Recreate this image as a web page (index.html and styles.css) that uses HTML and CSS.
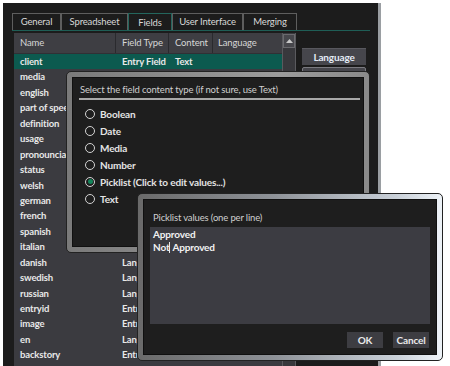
FILE: index.html
```html
<!DOCTYPE html>
<html lang="en">
<head>
    <meta charset="UTF-8">
    <meta name="viewport" content="width=device-width, initial-scale=1.0">
    <title>Fields</title>
    <link rel="stylesheet" href="styles.css">
</head>
<body>
    <div class="window">
        <ul class="tabs">
            <li class="tab tab_general">General</li>
            <li class="tab tab_sheet">Spreadsheet</li>
            <li class="tab tab_fields on">Fields</li>
            <li class="tab tab_ui">User Interface</li>
            <li class="tab tab_merge">Merging</li>
        </ul>
        <div class="fields">
            <div class="grid">
                <div class="grid_head">
                    <span>Name</span>
                    <span>Field Type</span>
                    <span>Content</span>
                    <span>Language</span>
                </div>
                <!-- cells hidden behind the dialogs are left empty -->
                <ul class="rows">
                    <li class="row selected"><span>client</span><span>Entry Field</span><span>Text</span><span></span></li>
                    <li class="row"><span>media</span><span></span><span></span><span></span></li>
                    <li class="row"><span>english</span><span></span><span></span><span></span></li>
                    <li class="row"><span class="cut">part of speech</span><span></span><span></span><span></span></li>
                    <li class="row"><span>definition</span><span></span><span></span><span></span></li>
                    <li class="row"><span>usage</span><span></span><span></span><span></span></li>
                    <li class="row"><span class="cut">pronounciation</span><span></span><span></span><span></span></li>
                    <li class="row"><span>status</span><span></span><span></span><span></span></li>
                    <li class="row"><span>welsh</span><span></span><span></span><span></span></li>
                    <li class="row"><span>german</span><span></span><span></span><span></span></li>
                    <li class="row"><span>french</span><span></span><span></span><span></span></li>
                    <li class="row"><span>spanish</span><span></span><span></span><span></span></li>
                    <li class="row"><span>italian</span><span></span><span></span><span></span></li>
                    <li class="row"><span>danish</span><span class="peek">Language</span><span></span><span></span></li>
                    <li class="row"><span>swedish</span><span class="peek">Language</span><span></span><span></span></li>
                    <li class="row"><span>russian</span><span class="peek">Language</span><span></span><span></span></li>
                    <li class="row"><span>entryid</span><span class="peek">Entry Field</span><span></span><span></span></li>
                    <li class="row"><span>image</span><span class="peek">Entry Field</span><span></span><span></span></li>
                    <li class="row"><span>en</span><span class="peek">Language</span><span></span><span></span></li>
                    <li class="row"><span>backstory</span><span class="peek">Entry Field</span><span></span><span></span></li>
                </ul>
            </div>
            <div class="scrollbar">
                <div class="scroll_up">
                    <svg width="7" height="4" viewBox="0 0 7 4"><path d="M0 4 L3.5 0 L7 4 Z" fill="#c8c8c8"/></svg>
                </div>
            </div>
            <div class="side">
                <button class="side_btn">Language</button>
                <button class="side_btn"></button>
            </div>
        </div>
    </div>

    <!-- content type dialog -->
    <div class="dialog dialog_type">
        <div class="dialog_body">
            <div class="type_title">Select the field content type (if not sure, use Text)</div>
            <ul class="radios">
                <li class="radio"><i class="dot"></i>Boolean</li>
                <li class="radio"><i class="dot"></i>Date</li>
                <li class="radio"><i class="dot"></i>Media</li>
                <li class="radio"><i class="dot"></i>Number</li>
                <li class="radio checked"><i class="dot"></i>Picklist (Click to edit values...)</li>
                <li class="radio"><i class="dot"></i>Text</li>
            </ul>
        </div>
    </div>

    <!-- picklist dialog -->
    <div class="dialog dialog_pick">
        <div class="dialog_body">
            <div class="pick_title">Picklist values (one per line)</div>
            <div class="pick_values">
                <div>Approved</div>
                <div>Not<span class="caret"></span> Approved</div>
            </div>
            <div class="pick_btns">
                <button class="btn">OK</button>
                <button class="btn">Cancel</button>
            </div>
        </div>
    </div>
</body>
</html>
```

FILE: styles.css
```css
*{
    margin: 0;
    padding: 0;
    list-style: none;
    box-sizing: border-box;
}
body{
    background: #fff;
    font-family: Lato, "Open Sans", sans-serif;
    font-size: 9.5px;
    letter-spacing: -0.15px;
    color: #e4e4e4;
    overflow: hidden;
}
.window{
    width: 378px;
    height: 363px;
    margin: 3px 0 0 3px;
    padding-left: 11px;
    background: #1c1c1c;
    border-right: 3px solid #9a9ea2;
    overflow: hidden;
}

/* tabs */
.tabs{
    display: flex;
    width: 358px;
    height: 18px;
    margin: 10px 0 0 -2px;
    border-bottom: 1px solid #1f5e56;
}
.tab{
    height: 17px;
    line-height: 16px;
    text-align: center;
    border: 1px solid #5e5e5e;
    border-bottom: 0;
    color: #d8d8d8;
}
.tab_general{ width: 49px; }
.tab_sheet{ width: 67px; }
.tab_fields{ width: 44px; }
.tab_ui{ width: 71px; }
.tab_merge{ width: 54px; }
.tab.on{
    border-color: #24665d;
    line-height: 18px;
}

/* field list */
.fields{
    display: flex;
    margin-top: 2px;
    height: 340px;
}
.grid{
    width: 268px;
    background: #3b3b40;
}
.grid_head,
.row{
    display: grid;
    grid-template-columns: 102px 53px 44px 69px;
}
.grid_head{
    height: 21px;
    line-height: 20px;
    background: #3e3e43;
    border-bottom: 1px solid #303035;
    color: #d6d6d6;
}
.grid_head span{
    padding-left: 6px;
    border-right: 1px solid #2a2a2e;
}
.grid_head span:last-child{
    border-right: 0;
    padding-left: 5px;
}
.row{
    height: 15.45px;
    line-height: 15.45px;
    font-weight: 700;
    color: #e8e8e8;
}
.row span{
    padding-left: 6px;
    white-space: nowrap;
    overflow: hidden;
}
.row span.cut{
    width: 52px;
    padding-left: 0;
    margin-left: 6px;
}
.row span.peek{
    width: 15px;
    padding-left: 0;
    margin-left: 6px;
}
.row.selected{
    background: #0c5a4f;
}
.scrollbar{
    width: 14px;
    background: #38383c;
    border-left: 1px solid #5a5a5e;
    border-right: 1px solid #5a5a5e;
}
.scroll_up{
    height: 14px;
    margin: 1px 0 0 0;
    background: #47474c;
    border: 1px solid #6a6a6e;
    display: flex;
    align-items: center;
    justify-content: center;
}
.side{
    display: flex;
    flex-direction: column;
    gap: 2px;
    margin: 15px 0 0 6px;
}
.side_btn{
    width: 64px;
    height: 17px;
    background: #46464c;
    border: 0;
    border-top: 1px solid #58585e;
    color: #e4ecf6;
    font-family: inherit;
    font-size: 10px;
    letter-spacing: inherit;
    font-weight: 700;
}
.side_btn:last-child{
    border: 1px solid #7a7a80;
    border-radius: 2px;
}

/* dialogs */
.dialog{
    position: absolute;
    padding: 5px;
    border: 1px solid #222;
    border-radius: 5px;
}
.dialog_body{
    height: 100%;
    background: #1e1e1e;
    border: 1px solid #101010;
}
.dialog_type{
    left: 66px;
    top: 71px;
    width: 304px;
    height: 182px;
    background: linear-gradient(to right, #7a7a7a, #9c9c9c 70%, #8a8a8a);
}
.type_title{
    margin: 5px 3px 0 6px;
    padding: 0 0 1px 1px;
    line-height: 14px;
    color: #cfcfcf;
    border-bottom: 2px solid #a8a8a8;
}
.radios{
    margin: 5px 0 0 12px;
}
.radio{
    display: flex;
    align-items: center;
    gap: 5px;
    height: 17px;
    font-size: 10px;
    font-weight: 700;
}
.dot{
    width: 10px;
    height: 10px;
    border: 1px solid #d4d4d4;
    border-radius: 50%;
    display: flex;
    align-items: center;
    justify-content: center;
}
.radio.checked .dot::after{
    content: "";
    width: 5px;
    height: 5px;
    border-radius: 50%;
    background: #13855a;
}
.dialog_pick{
    left: 137px;
    top: 193px;
    width: 306px;
    height: 168px;
    background: linear-gradient(to right, #6a6a6a, #8e9298 45%, #c9d0d8 85%, #eef3f8);
}
.pick_title{
    margin: 10px 0 0 9px;
    line-height: 15px;
    color: #cfcfcf;
}
.pick_values{
    height: 97px;
    margin: 2px 6px 0 6px;
    padding: 1px 3px;
    background: #3c3c42;
    line-height: 13px;
    font-size: 10px;
    font-weight: 700;
    color: #f2f2f2;
}
.caret{
    display: inline-block;
    width: 1px;
    height: 11px;
    vertical-align: -2px;
    background: #e8e8e8;
}
.pick_btns{
    display: flex;
    justify-content: flex-end;
    gap: 10px;
    margin: 8px 7px 0 0;
}
.btn{
    width: 36px;
    height: 16px;
    background: #3d3d42;
    border: 0;
    color: #eaeaea;
    font-family: inherit;
    font-size: 10px;
    letter-spacing: inherit;
    font-weight: 700;
}
```
